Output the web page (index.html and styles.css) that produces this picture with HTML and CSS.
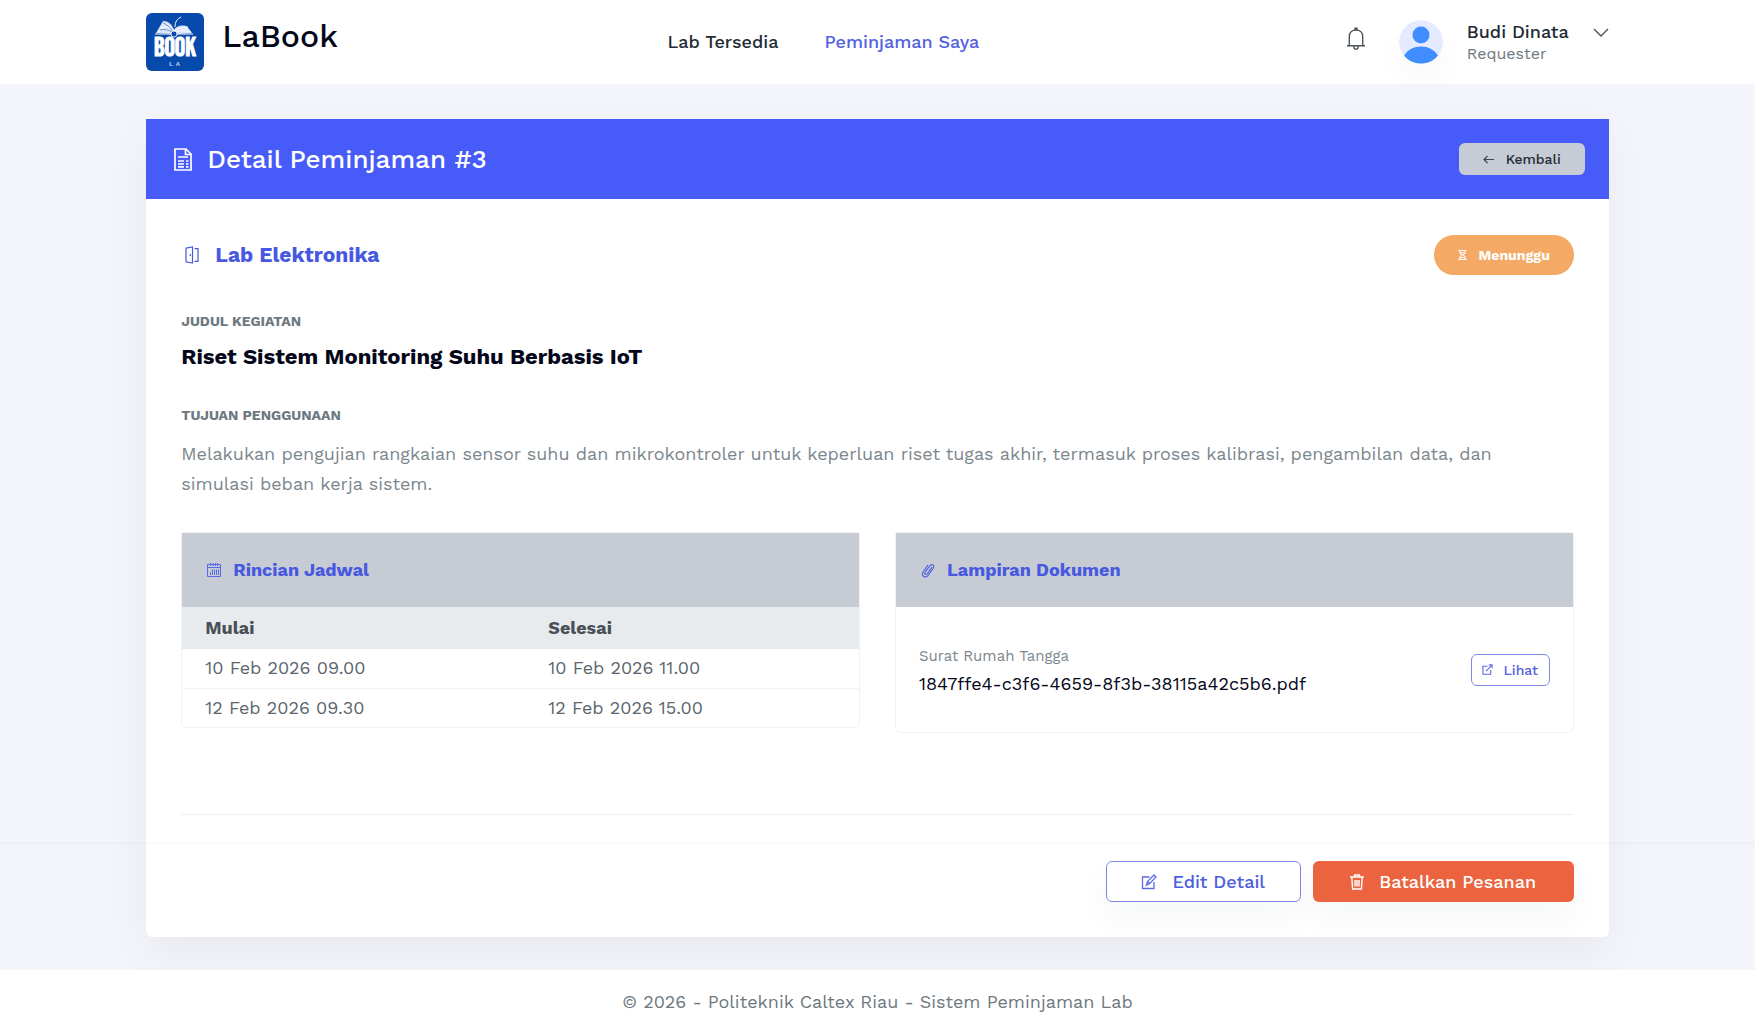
FILE: index.html
```html
<!DOCTYPE html>
<html lang="id">
<head>
<meta charset="utf-8">
<meta name="viewport" content="width=device-width, initial-scale=1">
<title>Detail Peminjaman - LaBook</title>
<link rel="stylesheet" href="styles.css">
</head>
<body>
<header class="topbar">
  <div class="container topbar-row">
    <a class="brand" href="#">
      <svg class="brand-logo" viewBox="0 0 58 58" aria-hidden="true">
        <rect width="58" height="58" rx="6" fill="#0849ac"/>
        <path d="M10 20l7-12c5 0 9 3 11 9 3-5 9-5 13-4l5 7-17 1z" fill="#d9e3fa"/>
        <path d="M12 19c7-3 12-2 16 1 5-3 10-3 17-1M14 15c6-2 10-1 14 4M16 11c5 0 9 2 12 7 4-3 8-3 14-3M29 14c0-5 2-8 6-10M9 21h15c2 3 6 3 8 0h15" fill="none" stroke="#fff" stroke-width="1"/>
        <path d="M17 10c5 2 8 5 10 9M14 17c5-1 9 0 12 2" fill="none" stroke="#0849ac" stroke-width="0.6"/>
        <circle cx="28" cy="21" r="3" fill="#0849ac" stroke="#fff" stroke-width="0.8"/>
        <text class="logo-word" x="29" y="43" text-anchor="middle">BOOK</text>
        <text class="logo-sub" x="25" y="53" text-anchor="middle">L</text>
        <text class="logo-sub" x="32" y="53" text-anchor="middle">A</text>
      </svg>
      <span class="brand-name">LaBook</span>
    </a>
    <nav class="menu">
      <a class="menu-link" href="#">Lab Tersedia</a>
      <a class="menu-link active" href="#">Peminjaman Saya</a>
    </nav>
    <div class="account">
      <button class="bell" type="button" aria-label="Notifikasi">
        <svg width="18" height="24" viewBox="0 0 18 24" fill="none" stroke="#4a545c" stroke-width="1.4"><path d="M0 18.7h18M2.3 18.7V9.5C2.3 5.500 5 3 9 3s6.700 2.500 6.700 6.500v9.200M8 2.800V1.200h2v1.600M7 19v1.500c0 2.200 4 2.200 4 0V19"/></svg>
      </button>
      <button class="user" type="button">
        <svg class="avatar" viewBox="0 0 44 44" aria-hidden="true"><circle cx="22" cy="22" r="22" fill="#e4eaff"/><circle cx="22" cy="15" r="8.500" fill="#3f8dff"/><path d="M5 35.500c4-6 10-9 17-9s13 3 17 9c-4 5.500-10 8-17 8s-13-2.500-17-8z" fill="#3f8dff"/></svg>
        <span class="user-text"><span class="user-name">Budi Dinata</span><span class="user-role">Requester</span></span>
        <svg class="chevron" width="16" height="10" viewBox="0 0 16 10" fill="none" stroke="#4a545c" stroke-width="1.4"><path d="M1 1l7 7 7-7"/></svg>
      </button>
    </div>
  </div>
</header>

<main class="container page">
  <article class="card">
    <header class="card-head">
      <h1 class="card-title">
        <svg width="18" height="23" viewBox="0 0 18 23" fill="none" stroke="#fff" stroke-width="1.700"><path d="M1 1h11l5 5v16H1zM11.500 1v5.500H17M4 9h10M4 13h6M12 13h2.500M4 16h6M12 16h2.500M4 18.800h6M12 18.800h2.500"/></svg>
        Detail Peminjaman #3
      </h1>
      <a class="btn btn-back" href="#">
        <svg width="11" height="9" viewBox="0 0 11 9" fill="none" stroke="#3c4650" stroke-width="1.200"><path d="M11 4.500H1M4.500 1L1 4.500 4.500 8"/></svg>
        Kembali
      </a>
    </header>
    <div class="card-body">
      <div class="lab-row">
        <h2 class="lab-name">
          <svg width="14" height="18" viewBox="0 0 14 18" fill="none" stroke="#4659e0" stroke-width="1.200"><path d="M1 2.200L7.500 1v16L1 15.800zM5.300 8v2M9.500 2.600H13v12.800H9.500"/></svg>
          Lab Elektronika
        </h2>
        <span class="badge">
          <svg width="9" height="12" viewBox="0 0 10 12" fill="none" stroke="#fff" stroke-width="1.200"><path d="M.5 1h9M.5 11h9M2 1v2.200L4.200 6 2 8.800V11M8 1v2.200L5.800 6 8 8.800V11M3 3.500h4M3 9h4"/></svg>
          Menunggu
        </span>
      </div>

      <h3 class="label">JUDUL KEGIATAN</h3>
      <p class="activity">Riset Sistem Monitoring Suhu Berbasis IoT</p>
      <h3 class="label">TUJUAN PENGGUNAAN</h3>
      <p class="purpose">Melakukan pengujian rangkaian sensor suhu dan mikrokontroler untuk keperluan riset tugas akhir, termasuk proses kalibrasi, pengambilan data, dan simulasi beban kerja sistem.</p>

      <div class="panels">
        <section class="panel">
          <h3 class="panel-head">
            <svg width="14" height="14" viewBox="0 0 14 14" fill="none" stroke="#5b6ae6"><path d="M.5 1.500h13v12H.5zM.5 4.500h13M3.500 0v3M6 0v3M8.500 0v3M10.500 0v3M3.500 9v3M5.500 6.500V12M7.500 6.500V12M9.500 6.500V12M11.500 6.500V12"/></svg>
            Rincian Jadwal
          </h3>
          <table class="schedule">
            <thead><tr><th scope="col">Mulai</th><th scope="col">Selesai</th></tr></thead>
            <tbody>
              <tr><td>10 Feb 2026 09.00</td><td>10 Feb 2026 11.00</td></tr>
              <tr><td>12 Feb 2026 09.30</td><td>12 Feb 2026 15.00</td></tr>
            </tbody>
          </table>
        </section>
        <section class="panel">
          <h3 class="panel-head">
            <svg width="14" height="15" viewBox="0 0 14 15" fill="none" stroke="#4659e0" stroke-width="1.100"><path d="M11 4L6.500 10.500c-1.400 2-3.600.6-2.400-1.200L8.600 3c2-2.800 5.400-.7 3.500 2.300L7.500 12c-2.800 4-8 1-5.400-3L7 2"/></svg>
            Lampiran Dokumen
          </h3>
          <div class="file">
            <div class="file-text"><span class="file-label">Surat Rumah Tangga</span><span class="file-name">1847ffe4-c3f6-4659-8f3b-38115a42c5b6.pdf</span></div>
            <a class="btn btn-view" href="#">
              <svg width="11" height="11" viewBox="0 0 12 12" fill="none" stroke="#5b6ae6" stroke-width="1.200"><path d="M6 2.500H1v8.700h8.500V6.500M7.500 1H11v3.500M11 1L4.500 7.800"/></svg>
              Lihat
            </a>
          </div>
        </section>
      </div>

      <div class="actions">
        <a class="btn btn-edit" href="#">
          <svg width="16" height="16" viewBox="0 0 16 16" fill="none" stroke="#5b6ae6" stroke-width="1.300"><path d="M8.500 3H1.500v11.500H13V8M5.500 11l1-3.500L13 1l2 2-6.500 6.700zM6.500 7.500l2 2.200"/></svg>
          Edit Detail
        </a>
        <button class="btn btn-cancel" type="button">
          <svg width="14" height="16" viewBox="0 0 14 16" fill="none" stroke="#fff" stroke-width="1.400"><path d="M0 3h14M4.500 3V1h5v2M1.800 3l.8 12h8.800l.8-12M5 6v6.500M7 6v6.500M9 6v6.500"/></svg>
          Batalkan Pesanan
        </button>
      </div>
    </div>
  </article>
</main>

<footer class="footer">© 2026 - Politeknik Caltex Riau - Sistem Peminjaman Lab</footer>
</body>
</html>
```

FILE: styles.css
```css
* { box-sizing: border-box; }
body {
  margin: 0;
  min-height: 100vh;
  display: flex;
  flex-direction: column;
  background: #f4f5fa;
  color: #6d7880;
  font-family: "Work Sans", Inter, sans-serif;
  font-size: 18px;
  line-height: 30px;
}
h1, h2, h3, p { margin: 0; }
a { color: inherit; text-decoration: none; }
button { font: inherit; cursor: pointer; }
svg { flex: none; }

.container { width: 83.33%; margin: 0 auto; }

.topbar { background: #fff; }
.topbar-row {
  display: flex;
  align-items: center;
  justify-content: space-between;
  height: 84px;
}
.brand { display: flex; align-items: center; gap: 18px; }
.brand-logo { width: 58px; height: 58px; }
.logo-word {
  font: 26px "Bebas Neue", "Anton", "Oswald", sans-serif;
  fill: #fff;
  stroke: #fff;
}
.logo-sub { font: bold 6px "Liberation Sans", sans-serif; fill: #c9d8f5; }
.brand-name {
  padding-bottom: 12px;
  color: #04061a;
  font-size: 32px;
  font-weight: 500;
  line-height: 40px;
}
.menu { display: flex; gap: 46px; margin-right: 38px; }
.menu-link { color: #212b34; font-weight: 500; }
.menu-link.active { color: #5461de; }
.account { display: flex; align-items: center; }
.bell { display: flex; margin-right: 34px; padding: 0 0 6px; border: 0; background: none; }
.user {
  display: flex;
  align-items: center;
  padding: 0;
  border: 0;
  background: none;
  text-align: left;
}
.avatar {
  width: 44px;
  height: 44px;
  margin-right: 24px;
  border-radius: 50%;
  box-shadow: 0 16px 32px rgba(30, 40, 60, 0.03);
}
.user-text { display: flex; flex-direction: column; padding-top: 2px; line-height: 22px; }
.user-name { color: #212b34; font-weight: 500; }
.user-role { color: #6d7880; font-size: 16px; }
.chevron { margin: 0 0 18px 24px; }

.page { padding: 35px 0 33px; }
.card {
  border-radius: 6px;
  background: #fff;
  box-shadow: 0 16px 48px rgba(0, 0, 0, 0.05);
}
.card-head {
  display: flex;
  align-items: center;
  justify-content: space-between;
  height: 80px;
  padding: 0 24px 0 28px;
  background: #465bf8;
}
.card-title {
  display: flex;
  align-items: center;
  gap: 15px;
  color: #fff;
  font-size: 26px;
  font-weight: 500;
}
.btn {
  display: inline-flex;
  align-items: center;
  justify-content: center;
  border: 1px solid transparent;
  border-radius: 6px;
  font-weight: 500;
}
.btn-back {
  gap: 12px;
  width: 126px;
  height: 32px;
  background: #c7cbd5;
  color: #212b34;
  font-size: 14px;
}
.card-body { padding: 36px 35px 35px; }
.lab-row {
  display: flex;
  align-items: center;
  justify-content: space-between;
  height: 40px;
  margin-bottom: 32px;
}
.lab-name {
  display: flex;
  align-items: center;
  gap: 16px;
  padding-left: 4px;
  color: #4659e0;
  font-size: 21px;
  font-weight: 700;
}
.badge {
  display: flex;
  align-items: center;
  justify-content: center;
  gap: 12px;
  width: 140px;
  height: 40px;
  border-radius: 20px;
  background: #f4a964;
  color: #fff;
  font-size: 14px;
  font-weight: 700;
}
.label { color: #6d7880; font-size: 14px; font-weight: 700; line-height: 28px; }
.activity {
  margin: 7px 0 29px;
  color: #04061a;
  font-size: 22px;
  font-weight: 700;
}
.purpose { margin: 10px 0 33px; padding-right: 35px; color: #7b868d; }

.panels { display: grid; grid-template-columns: 1fr 1fr; align-items: start; gap: 35px; }
.panel { overflow: hidden; border: 1px solid #f1f2f4; border-radius: 2px 2px 6px 6px; }
.panel-head {
  display: flex;
  align-items: center;
  gap: 12px;
  height: 74px;
  padding: 0 25px;
  background: #c7cbd4;
  color: #4659e0;
  font-size: 18px;
  font-weight: 700;
}
.schedule { width: 100%; border-collapse: collapse; table-layout: fixed; }
.schedule th {
  height: 42px;
  padding: 0 23px;
  background: #e8ebee;
  color: #495057;
  font-weight: 700;
  text-align: left;
}
.schedule td {
  height: 39px;
  padding: 0 23px;
  border-bottom: 1px solid #f1f3f5;
  color: #5c666e;
}
.schedule tr:last-child td { border-bottom: 0; }
.schedule th:first-child { width: 343px; }
.file {
  display: flex;
  align-items: center;
  justify-content: space-between;
  height: 125px;
  padding: 0 23px;
}
.file-text { display: flex; flex-direction: column; line-height: 28px; }
.file-label { color: #7b868d; font-size: 15px; }
.file-name { color: #04061a; }
.btn-view {
  gap: 10px;
  width: 79px;
  height: 32px;
  border-color: #7b88e8;
  color: #5461de;
  font-size: 14px;
}
.actions {
  display: flex;
  justify-content: flex-end;
  gap: 12px;
  margin-top: 81px;
  padding-top: 46px;
  border-top: 1px solid #eeeff1;
}
.btn-edit, .btn-cancel {
  height: 41px;
  font-size: 18px;
  box-shadow: 0 16px 32px rgba(30, 40, 60, 0.04);
}
.btn-edit { gap: 15px; width: 195px; border-color: #7b88e8; color: #4d5de0; }
.btn-cancel { gap: 15px; width: 261px; background: #eb643f; color: #fff; }

.footer {
  position: relative;
  margin-top: auto;
  padding: 17px 0 15px;
  background: #fff;
  text-align: center;
}
.footer::before {
  content: "";
  position: absolute;
  top: -128px;
  left: 0;
  right: 0;
  height: 2px;
  background: rgba(0, 0, 0, 0.02);
  pointer-events: none;
}
```
